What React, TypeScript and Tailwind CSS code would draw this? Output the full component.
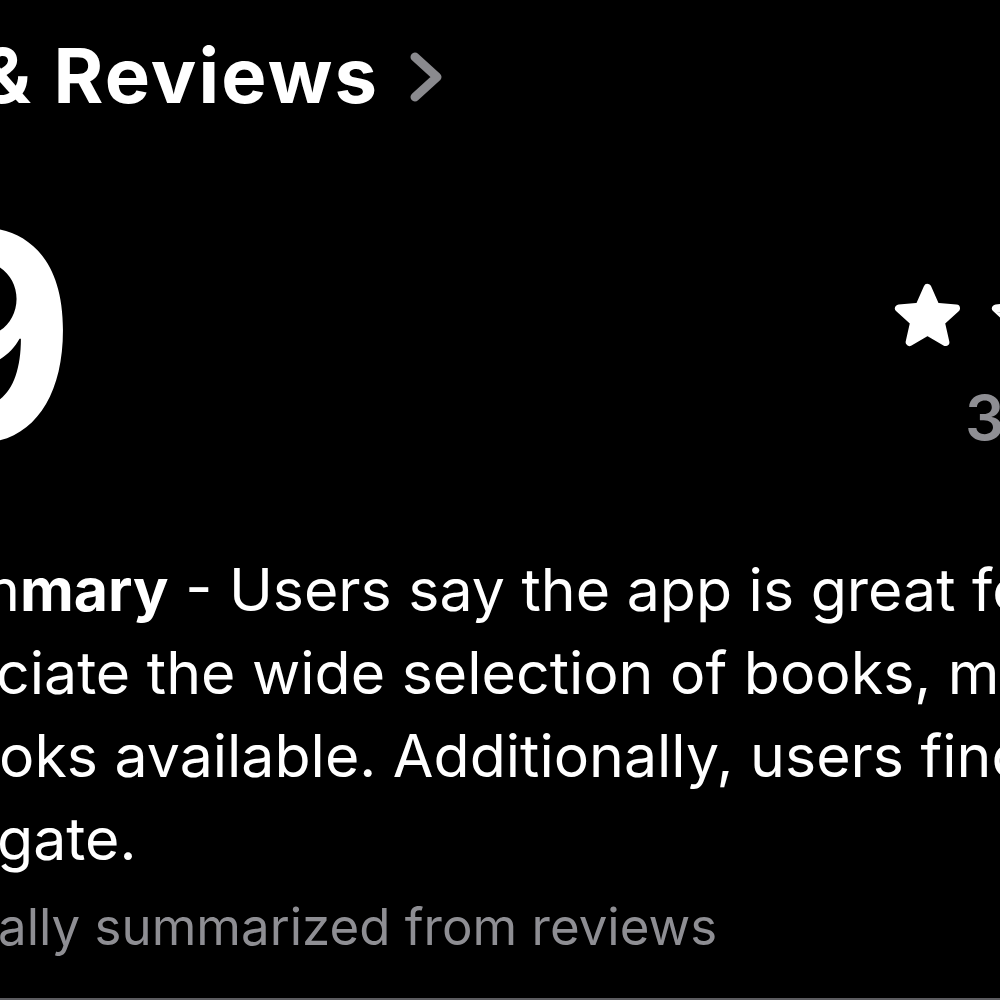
import type { ReactNode } from 'react';

const font = { fontFamily: 'Inter, "Noto Sans", sans-serif' };

// a line whose start is cut off by the left edge of the page
const CutLine = ({ hidden, children, className }: { hidden: string; children: ReactNode; className?: string }) => (
  <div className={`flex whitespace-nowrap ${className ?? ''}`}>
    <div className="flex w-0 justify-end">
      <span>{hidden}</span>
    </div>
    <span>{children}</span>
  </div>
);

const Star = () => (
  <svg viewBox="0 0 70 66" className="h-[65px] w-[69px] shrink-0" fill="#fff">
    <path
      d="M35 5 L43.4 24 L64 25.8 L48.6 39.8 L53.2 60 L35 49.4 L16.8 60 L21.4 39.8 L6 25.8 L26.6 24 Z"
      stroke="#fff"
      strokeWidth="8"
      strokeLinejoin="round"
    />
  </svg>
);

export default function App() {
  return (
    <div className="flex h-[1000px] w-[1000px] flex-col overflow-hidden bg-black text-white" style={font}>
      <div className="flex items-center pt-[37px]">
        <CutLine hidden="Ratings " className="ml-[-20px] text-[76px] font-bold leading-none tracking-[2.2px]">
          & Reviews
        </CutLine>
        <svg viewBox="0 0 34 50" className="ml-[30px] mt-[4px] h-[50px] w-[34px]" fill="none">
          <path d="M6 5 L28 25 L6 45" stroke="#8a8a8e" strokeWidth="9" strokeLinecap="round" strokeLinejoin="round" />
        </svg>
      </div>

      <div className="mt-[78px] flex">
        <CutLine hidden="4." className="ml-[-111px] text-[288px] font-bold leading-none">
          9
        </CutLine>
        <div className="ml-auto flex w-[107px] shrink-0 flex-col">
          <div className="mt-[92px] flex gap-[28px]">
            <Star />
            <Star />
            <Star />
            <Star />
            <Star />
          </div>
          <div className="ml-[72px] mt-[39px] whitespace-nowrap text-[62px] font-semibold leading-none text-[#8e8e93]">
            3.6M Ratings
          </div>
        </div>
      </div>

      <div className="mt-[69px] text-[59px] leading-[83px]">
        <CutLine hidden="Review Sum" className="ml-[20px]">
          <span className="font-bold">mary</span> - Users say the app is great for reading and listening. They
        </CutLine>
        <CutLine hidden="appre" className="ml-[-4px]">
          ciate the wide selection of books, magazines and audio
        </CutLine>
        <CutLine hidden="bo" className="ml-[-1px]">
          oks available. Additionally, users find the app easy to
        </CutLine>
        <CutLine hidden="navi" className="ml-[-3px]">
          gate.
        </CutLine>
      </div>

      <CutLine hidden="Automatic" className="ml-[-2px] mt-[12px] text-[51px] leading-[70px] text-[#8e8e93]">
        ally summarized from reviews
      </CutLine>

      <div className="mt-auto h-[2px] bg-[#5c5c60]" />
    </div>
  );
}
